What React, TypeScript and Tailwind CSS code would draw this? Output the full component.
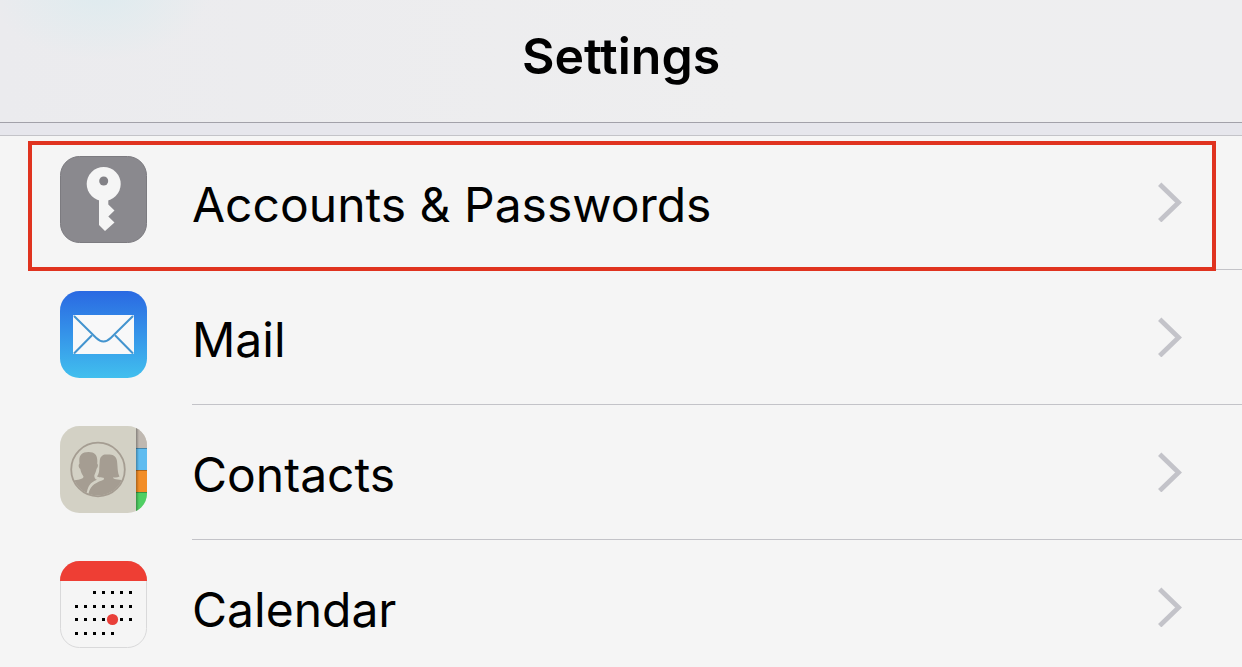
import type { ReactNode } from "react";

function KeyIcon() {
  return (
    <svg viewBox="0 0 87 87" className="size-[87px]" aria-hidden="true">
      <rect x=".5" y=".5" width="86" height="86" rx="19" fill="#8a898e" stroke="#7c7b80" />
      <circle cx="43.7" cy="28" r="17" fill="#f5f5f5" />
      <path d="M39 42H48.3V48.5L54.5 54.5L48.3 60.5L54.5 66.5L45 75L39 69Z" fill="#f5f5f5" />
      <circle cx="43.7" cy="25" r="4.5" fill="#828186" />
    </svg>
  );
}

function MailIcon() {
  return (
    <svg viewBox="0 0 87 87" className="size-[87px]" aria-hidden="true">
      <defs>
        <linearGradient id="mail-sky" x1="0" y1="0" x2="0" y2="1">
          <stop offset="0" stopColor="#2a69e2" />
          <stop offset=".5" stopColor="#3594e9" />
          <stop offset="1" stopColor="#41bfee" />
        </linearGradient>
      </defs>
      <rect width="87" height="87" rx="19.5" fill="url(#mail-sky)" />
      <rect x="13" y="24" width="61" height="39" rx="1" fill="#f8f8f9" />
      <g fill="none" stroke="#4394cf" strokeWidth="2">
        <path d="M14 25L36 46.8Q43.5 54.2 51 46.8L73 25" />
        <path d="M14 62.5L32 44.2M73 62.5L55 44.2" />
      </g>
    </svg>
  );
}

function ContactsIcon() {
  return (
    <svg viewBox="0 0 87 87" className="size-[87px]" aria-hidden="true">
      <defs>
        <clipPath id="contacts-tile">
          <rect width="87" height="87" rx="19.5" />
        </clipPath>
        <clipPath id="contacts-disc">
          <circle cx="38" cy="43.5" r="26" />
        </clipPath>
        <linearGradient id="contacts-fold" x1="0" y1="0" x2="1" y2="0">
          <stop offset="0" stopColor="#000" stopOpacity=".3" />
          <stop offset="1" stopColor="#000" stopOpacity="0" />
        </linearGradient>
      </defs>
      <g clipPath="url(#contacts-tile)">
        <rect width="87" height="87" fill="#d3d1c5" />
        <rect x="76" width="11" height="22" fill="#bfb8b1" />
        <rect x="76" y="22" width="11" height="22" fill="#5fbcf0" />
        <rect x="76" y="44" width="11" height="22" fill="#f28d27" />
        <rect x="76" y="66" width="11" height="21" fill="#4fcf63" />
        <path d="M76 22.5H87M76 44.5H87M76 66.5H87" stroke="#000" strokeOpacity=".28" />
        <rect x="76" width="3" height="87" fill="url(#contacts-fold)" />
      </g>
      <g clipPath="url(#contacts-disc)" fill="#a59d92">
        <path d="M10 54.5C17 54 23.5 53.5 23.5 50.5C22 48 20.7 46 20.3 43C18.3 41 18.2 39 19.5 37.5C18.5 30 21 26 28.5 26C35.500 26 38 30 37.2 37.5C38.5 39 38 41 36.5 43C36 46 34.8 48 34.3 49.5C34.3 52 35 53 37 53.8C30 56.5 27 60 26.3 72H10Z" />
        <path d="M37 50.5C39 48 39.3 45 39.3 41L39.8 34C40.500 29.5 44 27.8 47.5 28.6C53.5 27.5 56.5 31 57 35C57.8 42 57.5 46.5 59.5 50.5C57 51.8 54 51.3 52.8 51.6C53.3 53.6 58 53.5 66 54.5V72H28C28.5 62 33 57.5 42 54.5C44 53.8 44.5 53 43.5 51.7C41 51.7 39 51.3 37 50.5Z" />
      </g>
      <circle cx="38" cy="43.5" r="26.8" fill="none" stroke="#a59d92" strokeWidth="1.8" />
    </svg>
  );
}

const calendarDots = [
  { y: 31.5, xs: [34.5, 43.5, 52.5, 61.5, 70.5] },
  { y: 45.5, xs: [16.5, 25.5, 34.5, 43.5, 52.5, 61.5, 70.5] },
  { y: 58.5, xs: [16.5, 25.5, 34.5, 43.5, 61.5, 70.5] },
  { y: 72.5, xs: [16.5, 25.5, 34.5, 43.5, 52.5] },
];

function CalendarIcon() {
  return (
    <svg viewBox="0 0 87 87" className="size-[87px]" aria-hidden="true">
      <defs>
        <clipPath id="calendar-tile">
          <rect width="87" height="87" rx="19.5" />
        </clipPath>
      </defs>
      <rect x=".5" y=".5" width="86" height="86" rx="19" fill="#f5f5f5" stroke="#d9d9da" />
      <rect width="87" height="20" fill="#ee3e34" clipPath="url(#calendar-tile)" />
      {calendarDots.map(({ y, xs }) =>
        xs.map((x) => (
          <rect key={`${x}-${y}`} x={x - 1.5} y={y - 1.5} width="3" height="3" fill="#000" />
        )),
      )}
      <circle cx="52.5" cy="58.5" r="5.6" fill="#e93f39" />
    </svg>
  );
}

function Chevron() {
  return (
    <svg viewBox="0 0 24 40" className="h-10 w-6 shrink-0" aria-hidden="true">
      <path d="M1.7 2.3L20.6 20.5L1.7 38.7" fill="none" stroke="#c3c3c9" strokeWidth="4.8" />
    </svg>
  );
}

type Item = { label: string; icon: ReactNode; highlighted?: boolean };

const items: Item[] = [
  { label: "Accounts & Passwords", icon: <KeyIcon />, highlighted: true },
  { label: "Mail", icon: <MailIcon /> },
  { label: "Contacts", icon: <ContactsIcon /> },
  { label: "Calendar", icon: <CalendarIcon /> },
];

function SettingsRow({ label, icon, highlighted }: Item) {
  return (
    <li className="relative">
      <a href="#" className="flex h-[135px] pl-[60px]">
        <span className="w-[132px] shrink-0 pt-[21px]">{icon}</span>
        <span className="flex min-w-0 flex-1 items-center justify-between border-b border-[#c3c3c8] pr-[60px]">
          <span className="pt-1.5 text-[48px] leading-[60px]">{label}</span>
          <Chevron />
        </span>
      </a>
      {highlighted && (
        <span className="pointer-events-none absolute top-1.5 right-[26px] -bottom-px left-7 border-4 border-[#e0331f]" />
      )}
    </li>
  );
}

export default function App() {
  return (
    <main className="flex h-screen flex-col overflow-hidden bg-[#f5f5f5] font-['Inter','Liberation_Sans',sans-serif] text-black">
      <header className="shrink-0 border-b border-[#a2a1a9] bg-[#ededef] bg-[radial-gradient(ellipse_110px_70px_at_100px_-10px,#deebef,transparent),linear-gradient(90deg,#ebebee,#eeeeef_60%,#eeeef0)] pt-[26px] pb-9 text-center">
        <h1 className="text-[50px] leading-[60px] font-semibold">Settings</h1>
      </header>
      <div className="h-3 shrink-0 bg-[#e6e6ec]" />
      <nav aria-label="Settings" className="relative min-h-0 flex-1">
        <ul className="shadow-[inset_0_1px_0_#c3c3c8]">
          {items.map((item) => (
            <SettingsRow key={item.label} {...item} />
          ))}
        </ul>
      </nav>
    </main>
  );
}
